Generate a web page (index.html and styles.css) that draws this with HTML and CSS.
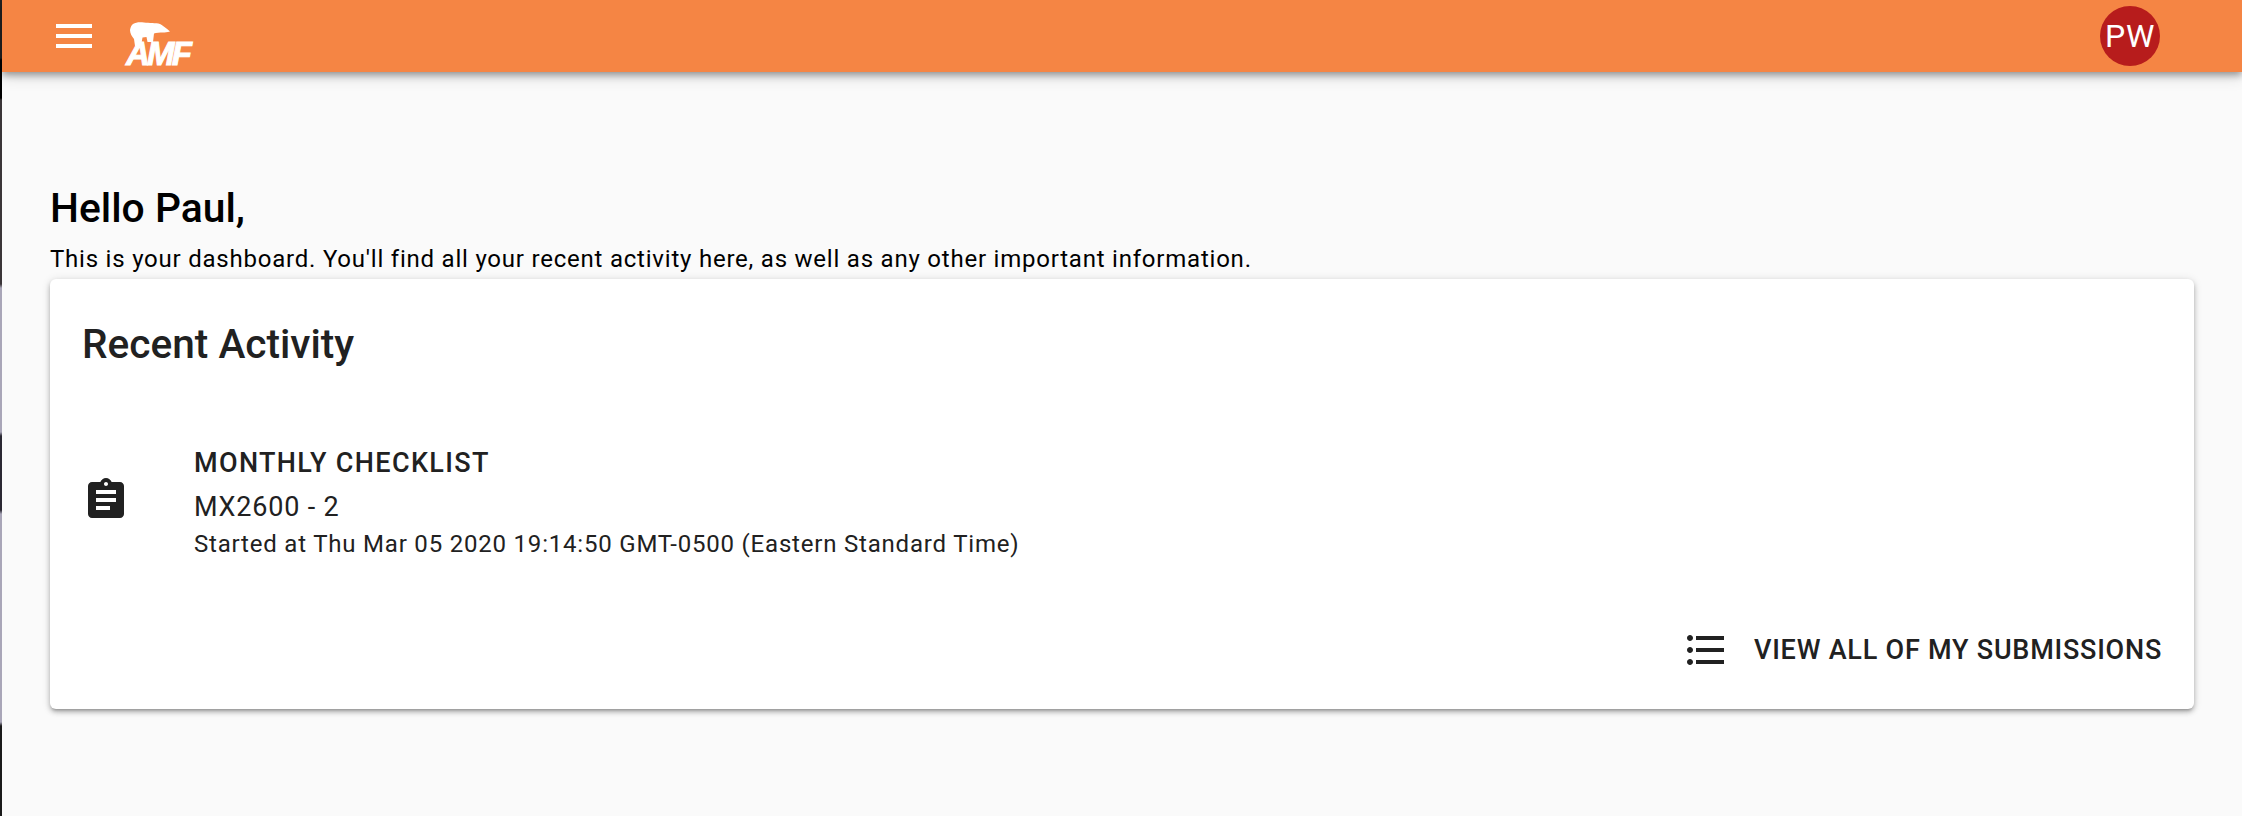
FILE: index.html
```html
<!DOCTYPE html>
<html lang="en">
<head>
  <meta charset="UTF-8">
  <meta name="viewport" content="width=device-width, initial-scale=1.0">
  <title>Dashboard</title>
  <link rel="stylesheet" href="styles.css">
</head>
<body>

<!-- Sliver of the desktop showing at the left edge -->
<div class="edge-strip"></div>

<div class="app">
  <header class="toolbar">
    <svg class="icon" viewBox="0 0 24 24"><path d="M3 18h18v-2H3v2zm0-5h18v-2H3v2zm0-7v2h18V6H3z"/></svg>
    <div class="logo">
      <svg class="logo-bear" viewBox="0 0 40 24"><path d="M0 8 C0.500 5 1.500 3 3 2 C6 0 10 0 14 0.500 C19 1.200 26 0.800 30 2 C32 2.800 33 4 34.500 5 C36.500 6.500 38.500 8 40 9.500 C37 10.500 35 10.300 33 10.500 C30 10.600 26 10.800 24 11.500 L23 20 L17.500 20 L16.500 15 L12.500 15.500 L11 24 L5 24 L4 17 C2 14.500 0 11.500 0 8 Z"/></svg>
      <span class="logo-text">AMF</span>
    </div>
    <div class="avatar">PW</div>
  </header>

  <main class="content">
    <h1 class="greeting">Hello Paul,</h1>
    <p class="intro">This is your dashboard. You'll find all your recent activity here, as well as any other important information.</p>

    <section class="card">
      <h2 class="card-title">Recent Activity</h2>

      <div class="activity">
        <svg class="icon activity-icon" viewBox="0 0 24 24"><path d="M19 3h-4.180C14.400 1.840 13.300 1 12 1c-1.300 0-2.400.84-2.820 2H5c-1.100 0-2 .9-2 2v14c0 1.100.9 2 2 2h14c1.100 0 2-.9 2-2V5c0-1.100-.9-2-2-2zm-7 0c.55 0 1 .45 1 1s-.45 1-1 1-1-.45-1-1 .45-1 1-1zm2 14H7v-2h7v2zm3-4H7v-2h10v2zm0-4H7V7h10v2z"/></svg>
        <div class="activity-text">
          <div class="activity-type">MONTHLY CHECKLIST</div>
          <div class="activity-name">MX2600 - 2</div>
          <div class="activity-date">Started at Thu Mar 05 2020 19:14:50 GMT-0500 (Eastern Standard Time)</div>
        </div>
      </div>

      <div class="card-actions">
        <a class="view-all" href="#">
          <svg class="icon" viewBox="0 0 24 24"><path d="M4 10.500c-.83 0-1.500.67-1.500 1.500s.67 1.500 1.500 1.500 1.500-.67 1.500-1.500-.67-1.500-1.500-1.500zm0-6c-.83 0-1.500.67-1.500 1.500S3.170 7.500 4 7.500 5.500 6.830 5.500 6 4.830 4.500 4 4.500zm0 12c-.83 0-1.500.68-1.500 1.500s.68 1.500 1.500 1.500 1.500-.68 1.500-1.500-.67-1.500-1.500-1.500zM7 19h14v-2H7v2zm0-6h14v-2H7v2zm0-8v2h14V5H7z"/></svg>
          <span>VIEW ALL OF MY SUBMISSIONS</span>
        </a>
      </div>
    </section>
  </main>
</div>

</body>
</html>
```

FILE: styles.css
```css
* {box-sizing: border-box;}
html, body {height: 100%;}
body {
  margin: 0;
  display: flex;
  overflow: hidden;
  font-family: Roboto, sans-serif;
  background-color: #fafafa;
  color: #212121;
}

.edge-strip {
  flex: 0 0 2px;
  background: linear-gradient(to bottom,
    #222 0, #222 58px, #000 60px, #000 98px,
    #3a3538 100px, #3a3538 284px,
    #a9a6b8 288px, #a9a6b8 432px,
    #2a2833 436px, #2a2833 510px,
    #a9a6b8 514px, #a9a6b8 722px,
    #1a1a1a 726px, #1a1a1a 100%);
}

.app {flex: 1; min-width: 0;}

.icon {width: 48px; height: 48px; fill: currentColor; flex: none; display: block;}

/* Top bar */
.toolbar {
  height: 72px;
  display: flex;
  align-items: center;
  padding: 0 82px 0 48px;
  background-color: #f58544;
  color: #fff;
  box-shadow: 0 3px 7px rgba(0, 0, 0, 0.35), 0 6px 14px rgba(0, 0, 0, 0.12);
}

.logo {
  height: 44px;
  margin: 16px 0 0 28px;
  display: flex;
  flex-direction: column;
}
.logo-bear {width: 40px; height: 24px; margin-left: 4px; fill: #fff; display: block;}
.logo-text {
  font-family: "Liberation Sans", sans-serif;
  font-weight: 700;
  font-style: italic;
  font-size: 33px;
  line-height: 24px;
  margin-top: -4px;
  letter-spacing: -2.800px;
  -webkit-text-stroke: 1px #fff;
}

.avatar {
  margin-left: auto;
  width: 60px;
  height: 60px;
  border-radius: 50%;
  background-color: #b71c1c;
  font-size: 32px;
  letter-spacing: 0.8px;
  display: flex;
  align-items: center;
  justify-content: center;
}

/* Page content */
.content {padding: 112px 48px 0;}

.greeting {
  margin: 0;
  font-size: 40.800px;
  line-height: 48px;
  font-weight: 500;
  color: #000;
}

.intro {
  margin: 10px 0 0;
  font-size: 24px;
  line-height: 34px;
  letter-spacing: 0.78px;
  color: #000;
}

.card {
  height: 430px;
  margin-top: 3px;
  padding: 41px 32px 35px;
  display: flex;
  flex-direction: column;
  background-color: #fff;
  border-radius: 6px;
  box-shadow: 0 3px 3px -2px rgba(0, 0, 0, 0.2), 0 3px 5px rgba(0, 0, 0, 0.25), 0 1px 10px rgba(0, 0, 0, 0.12);
}

.card-title {
  margin: 0;
  font-size: 40.600px;
  line-height: 48px;
  font-weight: 500;
}

.activity {
  display: flex;
  align-items: center;
  margin-top: 75px;
}
.activity-icon {margin: 0 64px 5px 0;}
.activity-type {font-size: 27px; line-height: 40px; font-weight: 500; letter-spacing: 1.350px;}
.activity-name {font-size: 27px; line-height: 40px; margin-top: 4px; letter-spacing: 0.8px;}
.activity-date {font-size: 24px; line-height: 34px; letter-spacing: 0.8px;}

.card-actions {
  margin-top: auto;
  display: flex;
  justify-content: flex-end;
}
.view-all {
  display: flex;
  align-items: center;
  gap: 24px;
  font-size: 27px;
  font-weight: 500;
  letter-spacing: 0.77px;
  color: #212121;
  text-decoration: none;
}
```
